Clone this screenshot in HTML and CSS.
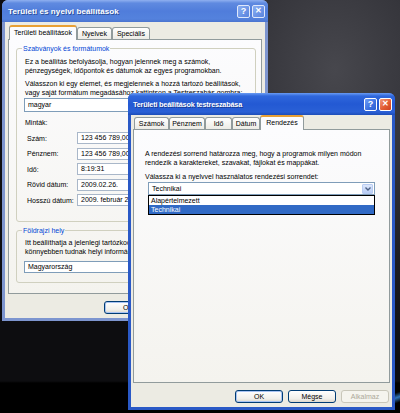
FILE: index.html
```html
<!DOCTYPE html>
<html lang="hu">
<head>
<meta charset="utf-8">
<title>Területi és nyelvi beállítások</title>
<link rel="stylesheet" href="styles.css">
</head>
<body>
<div class="desk">
  <div class="win back">
    <div class="titlebar">
      <span class="ttext">Területi és nyelvi beállítások</span>
      <span class="tbtns"><span class="tb help">?</span><span class="tb close">✕</span></span>
    </div>
    <div class="wbody">
      <div class="tabs">
        <span class="tab active">Területi beállítások</span>
        <span class="tab">Nyelvek</span>
        <span class="tab">Speciális</span>
      </div>
      <div class="panel bpanel">
        <fieldset class="grp g1">
          <legend>Szabványok és formátumok</legend>
          <p class="t1">Ez a beállítás befolyásolja, hogyan jelennek meg a számok,<br>pénzegységek, időpontok és dátumok az egyes programokban.</p>
          <p class="t2">Válasszon ki egy elemet, és megjelennek a hozzá tartozó beállítások,<br>vagy saját formátum megadásához kattintson a Testreszabás gombra:</p>
          <div class="crow"><div class="combo c1">magyar</div></div>
          <div class="minta">Minták:</div>
          <div class="samples">
            <div class="srow"><span class="lbl">Szám:</span><span class="val">123 456 789,00</span></div>
            <div class="srow"><span class="lbl">Pénznem:</span><span class="val">123 456 789,00</span></div>
            <div class="srow"><span class="lbl">Idő:</span><span class="val">8:19:31</span></div>
            <div class="srow"><span class="lbl">Rövid dátum:</span><span class="val">2009.02.26.</span></div>
            <div class="srow"><span class="lbl">Hosszú dátum:</span><span class="val">2009. február 26.</span></div>
          </div>
        </fieldset>
        <fieldset class="grp g2">
          <legend>Földrajzi hely</legend>
          <p class="t3">Itt beállíthatja a jelenlegi tartózkodási helyét,<br>könnyebben tudnak helyi információkat</p>
          <div class="combo c2">Magyarország</div>
        </fieldset>
      </div>
      <div class="btnrow bbtns">
        <button class="btn def">OK</button>
        <button class="btn"></button>
        <button class="btn"></button>
      </div>
    </div>
  </div>

  <div class="win front">
    <div class="titlebar">
      <span class="ttext">Területi beállítások testreszabása</span>
      <span class="tbtns"><span class="tb help">?</span><span class="tb close">✕</span></span>
    </div>
    <div class="wbody">
      <div class="tabs ftabs">
        <span class="tab w35">Számok</span>
        <span class="tab w36">Pénznem</span>
        <span class="tab w27">Idő</span>
        <span class="tab w28">Dátum</span>
        <span class="tab active w44">Rendezés</span>
      </div>
      <div class="panel fpanel">
        <p class="f1">A rendezési sorrend határozza meg, hogy a programok milyen módon<br>rendezik a karaktereket, szavakat, fájlokat és mappákat.</p>
        <p class="f2">Válassza ki a nyelvvel használatos rendezési sorrendet:</p>
        <div class="combo c3">
          <span>Technikai</span>
          <span class="arrow"><svg width="8" height="8" viewBox="0 0 8 8"><path d="M1.5 2.5 L4 5 L6.5 2.5" fill="none" stroke="#4d6185" stroke-width="1.4"/></svg></span>
          <div class="dlist">
            <div class="item">Alapértelmezett</div>
            <div class="item sel">Technikai</div>
          </div>
        </div>
      </div>
      <div class="btnrow fbtns">
        <button class="btn def">OK</button>
        <button class="btn">Mégse</button>
        <button class="btn dis">Alkalmaz</button>
      </div>
    </div>
  </div>
</div>
</body>
</html>
```
FILE: styles.css
```css
* { box-sizing: border-box; }
html, body { margin: 0; padding: 0; }
body {
  width: 400px;
  height: 413px;
  overflow: hidden;
  font-family: "Liberation Sans", Arial, sans-serif;
  font-size: 7px;
  color: #000;
  background: #0c0c0f;
}
p { margin: 0; }

.desk {
  position: relative;
  width: 400px;
  height: 413px;
  overflow: hidden;
  background:
    linear-gradient(160deg, rgba(0,0,0,0) 45%, #2f73b8 58%, rgba(0,0,0,0) 72%) 388px 378px / 12px 35px no-repeat,
    linear-gradient(to bottom, rgba(0,0,0,0) 0, rgba(0,0,0,0) 381px, #000 383px),
    radial-gradient(ellipse 230px 300px at 335px 70px, #47474d 0%, #36363c 35%, #1c1c21 70%, #0d0d10 100%);
  background-color: #0d0d10;
}

/* windows */
.win {
  position: absolute;
  display: flex;
  flex-direction: column;
  border-radius: 6px 6px 0 0;
  padding: 0 3px 3px;
}
.back {
  left: 2px;
  top: 0;
  width: 266px;
  height: 321px;
  background: #7d95cf;
}
.front {
  left: 128px;
  top: 93px;
  width: 267px;
  height: 317px;
  background: #2a59c6;
}

.titlebar {
  height: 22px;
  margin: 0 -3px;
  padding: 0 3px 0 6px;
  display: flex;
  align-items: center;
  justify-content: space-between;
  border-radius: 6px 6px 0 0;
  color: #fff;
  font-weight: bold;
  font-size: 8px;
}
.back .titlebar {
  background: linear-gradient(to bottom, #8fb0f0 0%, #5f8ae0 14%, #507ddb 50%, #5482dd 86%, #4a74cf 100%);
}
.front .titlebar {
  padding-left: 5px;
  font-size: 7.3px;
  background: linear-gradient(to bottom, #6a9cf4 0%, #2f67dc 14%, #2359d3 50%, #2a60d6 86%, #1d4db8 100%);
}
.front .ttext { letter-spacing: -0.2px; }
.ttext { text-shadow: 1px 1px 0 rgba(10, 30, 90, 0.55); letter-spacing: 0.1px; }
.tbtns { display: flex; gap: 2px; }
.tb {
  width: 13px;
  height: 13px;
  border: 1px solid #fff;
  border-radius: 2px;
  display: flex;
  align-items: center;
  justify-content: center;
  font-size: 9px;
  line-height: 1;
  color: #fff;
  background: linear-gradient(135deg, #6f9ef7, #3c70e0 60%, #2e5fd0);
}
.back .tb { border-color: #dfe8fb; background: linear-gradient(135deg, #8cb0f2, #6a93e6 60%, #5b84dc); }
.tb.close { font-size: 8px; }
.front .tb.close { background: linear-gradient(135deg, #f19a7b, #e35d34 55%, #cc4220); }

.wbody {
  flex: 1;
  display: flex;
  flex-direction: column;
  background: #ecebe3;
}
.back .wbody { padding: 3px 3px 0; }
.front .wbody { padding: 0 2px 0; }

/* tabs */
.tabs {
  display: flex;
  align-items: flex-end;
  height: 14px;
  padding-left: 1px;
  position: relative;
  z-index: 1;
}
.tab {
  height: 12px;
  padding: 0 4px;
  border: 1px solid #919b9c;
  border-bottom: none;
  border-radius: 3px 3px 0 0;
  background: linear-gradient(#ffffff, #ecebe5);
  line-height: 11px;
  white-space: nowrap;
}
.tab.active {
  height: 15px;
  margin-bottom: -1px;
  border-top: 2px solid #e8a035;
  background: #fcfcfe;
  line-height: 12px;
}
.ftabs { height: 14px; }
.ftabs .tab { padding: 0; text-align: center; }
.w35 { width: 35px; }
.w36 { width: 36px; }
.w27 { width: 27px; }
.w28 { width: 28px; }
.w44 { width: 44px; }

.panel {
  border: 1px solid #919b9c;
  background: linear-gradient(#fcfcfe, #f4f3ee);
}
.bpanel {
  height: 255px;
  padding: 4px 5px 0 7px;
}
.fpanel {
  height: 254px;
  padding: 19px 14px 0 11px;
}

/* group boxes */
.grp {
  margin: 0;
  border: 1px solid #d0d0bf;
  border-radius: 3px;
  padding: 0 6px 0 8px;
  min-width: 0;
}
.grp legend {
  color: #0046d5;
  padding: 0 1px;
  margin-left: -3px;
  line-height: 9px;
}
.g1 { height: 178px; }
.g2 { margin-top: 4px; height: 57px; }
.t1, .t2, .t3, .f1, .f2 { line-height: 9px; white-space: nowrap; }
.t1 { margin-top: 4px; }
.t2 { margin-top: 4px; }
.t3 { margin-top: 3px; }

.crow { display: flex; gap: 6px; margin-top: 1px; margin-left: -1px; }
.combo {
  height: 14px;
  border: 1px solid #7f9db9;
  background: #fff;
  padding-left: 3px;
  line-height: 12px;
}
.c1 { width: 150px; }
.c2 { width: 200px; height: 12px; line-height: 10px; margin-left: -1px; margin-top: 5px; }

.minta { margin-top: 6px; line-height: 9px; }
.samples { margin-top: 5px; margin-left: 2px; display: flex; flex-direction: column; gap: 3.5px; }
.srow { display: flex; align-items: center; height: 12px; }
.lbl { width: 50px; }
.val {
  width: 160px;
  height: 12px;
  border: 1px solid #a9b7c9;
  background: #fff;
  padding-left: 3px;
  line-height: 10px;
}

/* front content */
.f2 { margin-top: 5px; }
.c3 {
  position: relative;
  margin: 1px 0 0 3px;
  width: 227px;
  height: 13px;
  display: flex;
  align-items: center;
  justify-content: space-between;
  padding: 0 1px 0 3px;
  line-height: 11px;
}
.arrow {
  width: 11px;
  height: 10px;
  border: 1px solid #b9cdf2;
  border-radius: 1px;
  background: linear-gradient(#dce7fc, #b9cdf6);
  display: flex;
  align-items: center;
  justify-content: center;
}
.dlist {
  position: absolute;
  left: -1px;
  right: -1px;
  top: 12px;
  border: 1px solid #000;
  background: #fff;
  padding: 0;
}
.item { height: 9px; line-height: 9px; padding-left: 2px; }
.item.sel { background: #316ac5; color: #fff; }

/* buttons */
.btnrow { display: flex; justify-content: flex-end; gap: 5px; }
.bbtns { margin-top: 7px; padding-right: 4px; }
.fbtns { margin-top: 7px; padding-right: 1px; gap: 5px; }
.btn {
  width: 48px;
  height: 13px;
  padding: 0;
  border: 1px solid #003c74;
  border-radius: 3px;
  background: linear-gradient(#ffffff, #f0efea 70%, #dcd7cc);
  font: inherit;
  font-size: 7px;
  color: #000;
  text-align: center;
  line-height: 11px;
}
.btn.def { box-shadow: inset 0 0 0 1px #a8c3f2; }
.btn.dis { border-color: #c9c7ba; color: #aca899; background: #f5f4ee; }
```
